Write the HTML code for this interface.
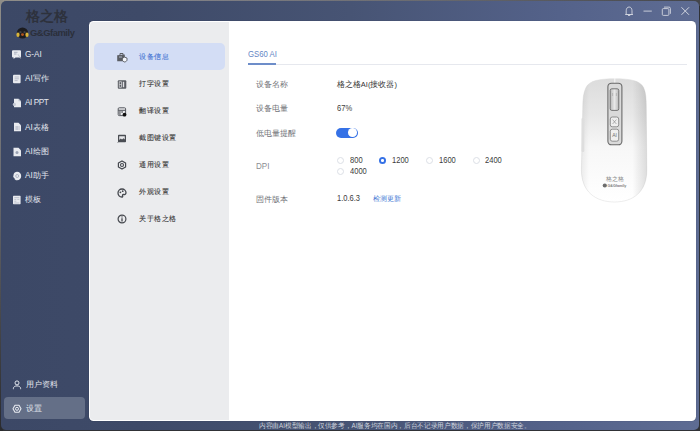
<!DOCTYPE html>
<html><head><meta charset="utf-8">
<style>
*{margin:0;padding:0;box-sizing:border-box}
html,body{width:700px;height:431px;overflow:hidden;background:#303236;font-family:"Liberation Sans",sans-serif;position:relative}
.a{position:absolute}
.t{position:absolute;white-space:nowrap;line-height:1}
#bgtop{left:0;top:0;width:700px;height:6px;background:linear-gradient(90deg,#c9b27e 0,#8f8d88 0.6%,#85858a 20%,#6a6b70 60%,#44464b 100%)}
#bgleft{left:0;top:0;width:3px;height:431px;background:linear-gradient(180deg,#8f8d88 0,#6c6d72 40%,#2a2b2e 100%)}
#win{left:0.6px;top:1.4px;width:698.4px;height:428.2px;border-radius:5px;background:linear-gradient(90deg,#3c4866 0%,#3e4a68 20%,#475474 50%,#54628a 80%,#5e6c93 100%)}
#panel{left:89.1px;top:20.8px;width:606.7px;height:400.6px;border-radius:4.5px;background:#fff;box-shadow:0 0 1px rgba(20,25,40,.5)}
#nav{left:90.2px;top:21.9px;width:138.8px;height:398.4px;background:#ebecee;border-radius:3.5px 0 0 3.5px}
.side{color:#e3e7ee;font-size:8.2px}
.side i{font-style:normal;font-size:7.5px}
.navt{color:#363636;font-size:7.5px;transform:scale(0.95);transform-origin:0 0;-webkit-text-stroke-width:0.1px}
.lbl{color:#707277;font-size:7.5px}
.val{color:#333;font-size:7.5px}
.num{color:#3c3c3c;font-size:8.4px;transform:scaleX(0.9);transform-origin:0 0}
.rad{position:absolute;width:7px;height:7px;border-radius:50%;border:0.8px solid #dcdfe6;background:#fff}
</style></head><body>
<div id="bgtop" class="a"></div><div id="bgleft" class="a"></div>
<div id="win" class="a"></div>

<!-- logo -->
<div class="t" style="left:25.8px;top:9.6px;font-family:'Liberation Serif',serif;font-weight:bold;font-size:13.6px;color:#2d313c">格之格</div>
<svg class="a" style="left:16px;top:26.5px" width="13" height="12" viewBox="0 0 13 12">
  <ellipse cx="6.5" cy="6" rx="5.6" ry="5.6" fill="#1c1c20"/>
  <ellipse cx="2" cy="7.8" rx="1.6" ry="2.2" fill="#d9b43a"/>
  <ellipse cx="11" cy="7.8" rx="1.6" ry="2.2" fill="#d9b43a"/>
  <ellipse cx="6.5" cy="7.6" rx="1.5" ry="1.4" fill="#b5561e"/>
  <ellipse cx="4.4" cy="5" rx="1.2" ry="0.6" fill="#6a6a6a"/>
  <ellipse cx="8.6" cy="5" rx="1.2" ry="0.6" fill="#6a6a6a"/>
</svg>
<div class="t" style="left:30px;top:28.1px;font-weight:bold;font-size:9.4px;color:#2b2f3a;letter-spacing:-0.45px">G&amp;Gfamily</div>

<!-- sidebar icons -->
<svg class="a" style="left:11px;top:49px" width="11" height="11" viewBox="0 0 11 11">
  <path d="M2 1.2h7a1 1 0 0 1 1 1v5.2a1 1 0 0 1-1 1H4.5L2.6 10V8.4H2a1 1 0 0 1-1-1V2.2a1 1 0 0 1 1-1z" fill="#e8eaef"/>
  <path d="M3 3.3h3.5M3 5h2.5" stroke="#9aa1b2" stroke-width="0.8"/>
  <path d="M7 5.2l2.5 4.2" stroke="#b9bfcc" stroke-width="0.9"/>
</svg>
<svg class="a" style="left:12px;top:74px" width="10" height="10" viewBox="0 0 10 10">
  <rect x="1" y="0.8" width="7.6" height="8.4" rx="1" fill="#e8eaef"/>
  <path d="M2.6 3h4.3M2.6 4.8h4.3M2.6 6.6h3" stroke="#a3a9b8" stroke-width="0.7"/>
</svg>
<svg class="a" style="left:11.5px;top:98px" width="10" height="10" viewBox="0 0 10 10">
  <path d="M2 0.8h4.5L9 3.3V9.2H2z" fill="#e8eaef"/>
  <path d="M6.5 0.8v2.5H9" fill="#b9bfcc"/>
  <circle cx="2.4" cy="6.4" r="1.6" fill="#c5cad5"/>
</svg>
<svg class="a" style="left:11.5px;top:122px" width="10" height="10" viewBox="0 0 10 10">
  <path d="M2 0.8h4.5L9 3.3V9.2H2z" fill="#e8eaef"/>
  <path d="M3 5h5M3 7h5M5 4v4" stroke="#a3a9b8" stroke-width="0.6"/>
</svg>
<svg class="a" style="left:12px;top:146.5px" width="10" height="10" viewBox="0 0 10 10">
  <path d="M1.5 0.8h5L9 3.3V9.2H1.5z" fill="#e8eaef"/>
  <circle cx="5" cy="5.5" r="1.5" fill="#9aa1b2"/>
</svg>
<svg class="a" style="left:11.5px;top:170.5px" width="10" height="10" viewBox="0 0 10 10">
  <path d="M5 0.8C7.5 0.8 9.2 2.5 9.2 5S7.5 9.2 5 9.2 3 8.5 2.6 7.5 1 6.5 1.2 5.5 1.5 4.5 1.6 3.5C2 1.8 3.4 0.8 5 0.8z" fill="#e8eaef"/>
  <circle cx="5.2" cy="5" r="1.5" fill="none" stroke="#9aa1b2" stroke-width="0.7"/>
</svg>
<svg class="a" style="left:12px;top:195px" width="10" height="10" viewBox="0 0 10 10">
  <rect x="1" y="0.8" width="7.6" height="8.4" rx="0.6" fill="#e8eaef"/>
  <path d="M2.3 2.6h5M2.3 4.4h2M5.3 4.4h2M2.3 6.2h2M2.3 8h5" stroke="#a3a9b8" stroke-width="0.6"/>
</svg>

<!-- sidebar items -->
<div class="t side" style="left:25px;top:50.8px">G-AI</div>
<div class="t side" style="left:25px;top:74.8px">AI<i>写作</i></div>
<div class="t side" style="left:25px;top:99.4px;letter-spacing:-0.45px">AI PPT</div>
<div class="t side" style="left:25px;top:123.6px">AI<i>表格</i></div>
<div class="t side" style="left:25px;top:147.6px">AI<i>绘图</i></div>
<div class="t side" style="left:25px;top:172px">AI<i>助手</i></div>
<div class="t side" style="left:25.3px;top:196.3px"><i>模板</i></div>

<svg class="a" style="left:12px;top:379.5px" width="10" height="10" viewBox="0 0 10 10">
  <circle cx="5" cy="2.9" r="2" fill="none" stroke="#e3e7ee" stroke-width="1"/>
  <path d="M1.4 8.8V8.4C1.4 6.9 3 5.9 5 5.9S8.6 6.9 8.6 8.4V8.8" fill="none" stroke="#e3e7ee" stroke-width="1" stroke-linecap="round"/>
</svg>
<div class="t side" style="left:25.7px;top:380.5px"><i>用户资料</i></div>
<div class="a" style="left:4.2px;top:397px;width:81px;height:21.6px;border-radius:4px;background:#646f87"></div>
<svg class="a" style="left:12px;top:403.5px" width="10" height="10" viewBox="0 0 10 10">
  <path d="M1 4.8L3 1.3H7L9 4.8 7 8.3H3z" fill="none" stroke="#e8ebf1" stroke-width="1.1" stroke-linejoin="round"/>
  <circle cx="5" cy="4.8" r="1.5" fill="none" stroke="#e8ebf1" stroke-width="1"/>
</svg>
<div class="t side" style="left:26.3px;top:404.5px"><i>设置</i></div>

<!-- titlebar icons -->
<svg class="a" style="left:620px;top:3px" width="75" height="16" viewBox="0 0 75 16">
  <g fill="none" stroke="#d2d6e0" stroke-width="0.9">
    <path d="M6.2 11.5V7.8C6.2 5.6 7.3 4 9.1 4s2.9 1.6 2.9 3.8v3.7z M5.2 11.5h7.8 M8 12.5h2.2"/>
    <path d="M23.5 8.1h8.3"/>
    <rect x="42.3" y="5.6" width="6.6" height="6.8" rx="1"/>
    <path d="M44 4.1h5a1.4 1.4 0 0 1 1.4 1.4v5.3"/>
    <path d="M61.5 4.3l7.5 7.5M69 4.3l-7.5 7.5" stroke-width="1"/>
  </g>
</svg>

<!-- footer -->
<div class="t" style="left:259.4px;top:422.6px;font-size:6.6px;color:#cfd4de;transform:scaleX(0.951);transform-origin:0 0">内容由AI模型输出，仅供参考，AI服务均在国内，后台不记录用户数据，保护用户数据安全。</div>

<!-- panel -->
<div id="panel" class="a"></div>
<div id="nav" class="a"></div>
<div class="a" style="left:93.8px;top:43px;width:131.2px;height:26.5px;border-radius:5px;background:#d3ddf5"></div>

<!-- nav icons -->
<svg class="a" style="left:116px;top:52px" width="12" height="11" viewBox="0 0 12 11">
  <path d="M1.2 3.2L8.8 2.6V9.2H1.2z" fill="#5a5d63"/>
  <path d="M4 3V1.5h3V3" fill="none" stroke="#5a5d63" stroke-width="1"/>
  <path d="M3 5h3" stroke="#d3ddf5" stroke-width="0.7"/>
  <path d="M8.7 5.1L11 6.1V7.8C11 9 10 9.6 8.7 10C7.4 9.6 6.4 9 6.4 7.8V6.1z" fill="#f4f6fb" stroke="#4f5258" stroke-width="0.9"/>
</svg>
<svg class="a" style="left:117px;top:80px" width="10" height="10" viewBox="0 0 10 10">
  <rect x="0.8" y="0.3" width="8.5" height="8.4" rx="1" fill="#5a5d63"/>
  <rect x="2.2" y="1.8" width="2.2" height="5.4" fill="none" stroke="#e0e1e4" stroke-width="0.7"/>
  <rect x="5.8" y="1.8" width="1.4" height="5.4" fill="#e0e1e4"/>
  <path d="M2.2 4.5h2.2" stroke="#e0e1e4" stroke-width="0.6"/>
</svg>
<svg class="a" style="left:117px;top:106.5px" width="10" height="10" viewBox="0 0 10 10">
  <rect x="1.2" y="0.8" width="7.4" height="7.8" rx="1" fill="none" stroke="#55585e" stroke-width="1"/>
  <path d="M1.2 3.3h7.4" stroke="#55585e" stroke-width="1.1"/>
  <rect x="2.1" y="4.3" width="1.6" height="1.4" fill="#55585e"/><rect x="4.3" y="4.3" width="1.6" height="1.4" fill="#55585e"/>
  <rect x="2.1" y="6.3" width="1.6" height="1.4" fill="#55585e"/>
  <circle cx="7.5" cy="7.7" r="1.9" fill="#111"/>
</svg>
<svg class="a" style="left:117px;top:133.5px" width="10" height="10" viewBox="0 0 10 10">
  <path d="M1.8 0.8H8.2A0.8 0.8 0 0 1 9 1.6V7.4A0.8 0.8 0 0 1 8.2 8.2H1.8A0.8 0.8 0 0 1 1 7.4V1.6A0.8 0.8 0 0 1 1.8 0.8Z" fill="#4a4d53"/>
  <path d="M2.2 2.2h5.6v3.2L6.5 4.3 5 5.6 3.8 4.6 2.2 6z" fill="#e6e7ea"/>
  <path d="M0.8 8.6L2.4 7" stroke="#4a4d53" stroke-width="0.9"/>
</svg>
<svg class="a" style="left:117px;top:160px" width="10" height="10" viewBox="0 0 10 10">
  <path d="M5 0.9L8.6 3V7L5 9.1 1.4 7V3z" fill="none" stroke="#45484e" stroke-width="1.2" stroke-linejoin="round"/>
  <circle cx="5" cy="5" r="1.5" fill="none" stroke="#45484e" stroke-width="1.1"/>
</svg>
<svg class="a" style="left:117px;top:187.5px" width="10" height="10" viewBox="0 0 10 10">
  <path d="M5 1C7.3 1 9 2.7 9 4.8c0 1.6-1.5 1.9-2.4 1.7-.9-.2-1.4.6-1 1.3.4.8-.2 1.2-.8 1.2C2.6 9 1 7.3 1 5S2.7 1 5 1z" fill="none" stroke="#45484e" stroke-width="1.3"/>
  <circle cx="3.4" cy="4.3" r="0.9" fill="#45484e"/>
  <circle cx="5.7" cy="3.2" r="0.9" fill="#45484e"/>
</svg>
<svg class="a" style="left:117px;top:214px" width="10" height="10" viewBox="0 0 10 10">
  <circle cx="5" cy="5" r="3.9" fill="none" stroke="#45484e" stroke-width="1.2"/>
  <path d="M5 4.3v3.1" stroke="#45484e" stroke-width="1.3"/>
  <circle cx="5" cy="2.9" r="0.7" fill="#45484e"/>
</svg>

<div class="t navt" style="left:139.2px;top:53.2px;color:#4776d4">设备信息</div>
<div class="t navt" style="left:139.2px;top:80px">打字设置</div>
<div class="t navt" style="left:139.2px;top:106.8px">翻译设置</div>
<div class="t navt" style="left:139.2px;top:133.8px">截图键设置</div>
<div class="t navt" style="left:139.2px;top:160.8px">通用设置</div>
<div class="t navt" style="left:139.2px;top:187.7px">外观设置</div>
<div class="t navt" style="left:139.2px;top:214.6px">关于格之格</div>

<!-- content -->
<div class="t" style="left:247.8px;top:49.9px;font-size:8.6px;color:#6485c4;transform:scaleX(0.9);transform-origin:0 0">GS60 AI</div>
<div class="a" style="left:276px;top:63.5px;width:411px;height:1.3px;background:#e6e8ee"></div>
<div class="a" style="left:247.8px;top:63px;width:28.2px;height:1.9px;background:#6d8dc9"></div>

<div class="t lbl" style="left:256px;top:81px">设备名称</div>
<div class="t val" style="left:336.8px;top:80.5px">格之格AI(接收器)</div>
<div class="t lbl" style="left:256px;top:104.6px">设备电量</div>
<div class="t num" style="left:336.8px;top:103.8px">67%</div>
<div class="t lbl" style="left:256px;top:130.2px">低电量提醒</div>
<div class="a" style="left:336.3px;top:127.5px;width:21.6px;height:10.1px;border-radius:5.1px;background:#3571e6"></div>
<div class="a" style="left:348px;top:128.3px;width:8.8px;height:8.5px;border-radius:50%;background:#fff"></div>

<div class="t lbl" style="left:256px;top:162.2px;font-size:8.5px;color:#8b8d92;transform:scaleX(0.95);transform-origin:0 0">DPI</div>
<div class="rad" style="left:336.8px;top:157.2px"></div>
<div class="t num" style="left:349.5px;top:156.2px">800</div>
<div class="a" style="left:378.8px;top:156.8px;width:7.6px;height:7.6px;border-radius:50%;background:#3571e6"></div>
<div class="a" style="left:381.3px;top:159.3px;width:2.6px;height:2.6px;border-radius:50%;background:#fff"></div>
<div class="t num" style="left:392px;top:156.2px">1200</div>
<div class="rad" style="left:425.5px;top:157px"></div>
<div class="t num" style="left:439px;top:156.2px">1600</div>
<div class="rad" style="left:472.5px;top:157px"></div>
<div class="t num" style="left:485px;top:156.2px">2400</div>
<div class="rad" style="left:336.8px;top:168px"></div>
<div class="t num" style="left:349.5px;top:167.2px">4000</div>

<div class="t lbl" style="left:256px;top:195.8px">固件版本</div>
<div class="t num" style="left:337.2px;top:193.8px">1.0.6.3</div>
<div class="t" style="left:373.3px;top:195.5px;font-size:6.5px;color:#4a7ed6">检测更新</div>

<!-- mouse -->
<svg class="a" style="left:575px;top:72px" width="80" height="136" viewBox="575 72 80 136">
  <defs>
    <linearGradient id="mg" x1="0" y1="0" x2="0" y2="1">
      <stop offset="0" stop-color="#dcdcdc"/>
      <stop offset="0.3" stop-color="#e8e8e8"/>
      <stop offset="0.55" stop-color="#f7f7f7"/>
      <stop offset="1" stop-color="#ffffff"/>
    </linearGradient>
    <linearGradient id="sg" x1="0" y1="0" x2="1" y2="0">
      <stop offset="0" stop-color="#000" stop-opacity="0.06"/>
      <stop offset="0.12" stop-color="#000" stop-opacity="0"/>
      <stop offset="0.78" stop-color="#000" stop-opacity="0"/>
      <stop offset="1" stop-color="#000" stop-opacity="0.12"/>
    </linearGradient>
    <linearGradient id="wg" x1="0" y1="0" x2="1" y2="0">
      <stop offset="0" stop-color="#b9b9b9"/>
      <stop offset="0.5" stop-color="#e8e8e8"/>
      <stop offset="1" stop-color="#b9b9b9"/>
    </linearGradient>
  </defs>
  <path id="mb" d="M614.8 78.8C630 78.8 640 80.5 643.6 87.5C646 92.5 646.2 99 646.3 106L646.8 170C647 192 633 202 614.5 202C596 202 581.4 192 581.4 170L582.8 106C582.9 99 583.4 92.5 586 87.5C589.5 80.5 599.5 78.8 614.8 78.8Z" fill="url(#mg)" stroke="#dadada" stroke-width="0.5"/>
  <path d="M614.8 78.8C630 78.8 640 80.5 643.6 87.5C646 92.5 646.2 99 646.3 106L646.8 170C647 192 633 202 614.5 202C596 202 581.4 192 581.4 170L582.8 106C582.9 99 583.4 92.5 586 87.5C589.5 80.5 599.5 78.8 614.8 78.8Z" fill="url(#sg)"/>
  <path d="M614.8 78V83" stroke="#fafafa" stroke-width="0.9"/>
  <rect x="581.5" y="118" width="2.8" height="34" rx="1" fill="#dedede"/>
  <rect x="607.9" y="83.2" width="14" height="61.6" rx="3.6" fill="#dadada" stroke="#6a6a6a" stroke-width="1.1"/>
  <rect x="610.2" y="88.8" width="8.6" height="21.6" rx="1.6" fill="url(#wg)" stroke="#6a6a6a" stroke-width="0.9"/>
  <path d="M612.6 93v3M616.4 93v3" stroke="#9a9a9a" stroke-width="0.5"/>
  <rect x="610.3" y="117" width="8.4" height="9.8" rx="2" fill="#efefef" stroke="#7a7a7a" stroke-width="0.8"/>
  <path d="M612.6 119.6l3.8 4.4M616.4 119.6l-3.8 4.4" stroke="#7a7a7a" stroke-width="0.55"/>
  <rect x="610.3" y="129.2" width="8.4" height="12" rx="2" fill="#efefef" stroke="#7a7a7a" stroke-width="0.8"/>
  <text x="614.5" y="137.4" font-size="5" text-anchor="middle" fill="#6e6e6e" font-family="Liberation Sans">AI</text>
  <text x="615.2" y="181" font-size="6.4" text-anchor="middle" fill="#8c8c8c" font-family="Liberation Serif">格之格</text>
  <circle cx="604.8" cy="185.5" r="2.1" fill="#6c6c6c"/>
  <text x="607.4" y="187.2" font-size="4" fill="#7a7a7a" font-weight="bold" font-family="Liberation Sans" textLength="19" lengthAdjust="spacingAndGlyphs">G&amp;Gfamily</text>
</svg>
</body></html>
